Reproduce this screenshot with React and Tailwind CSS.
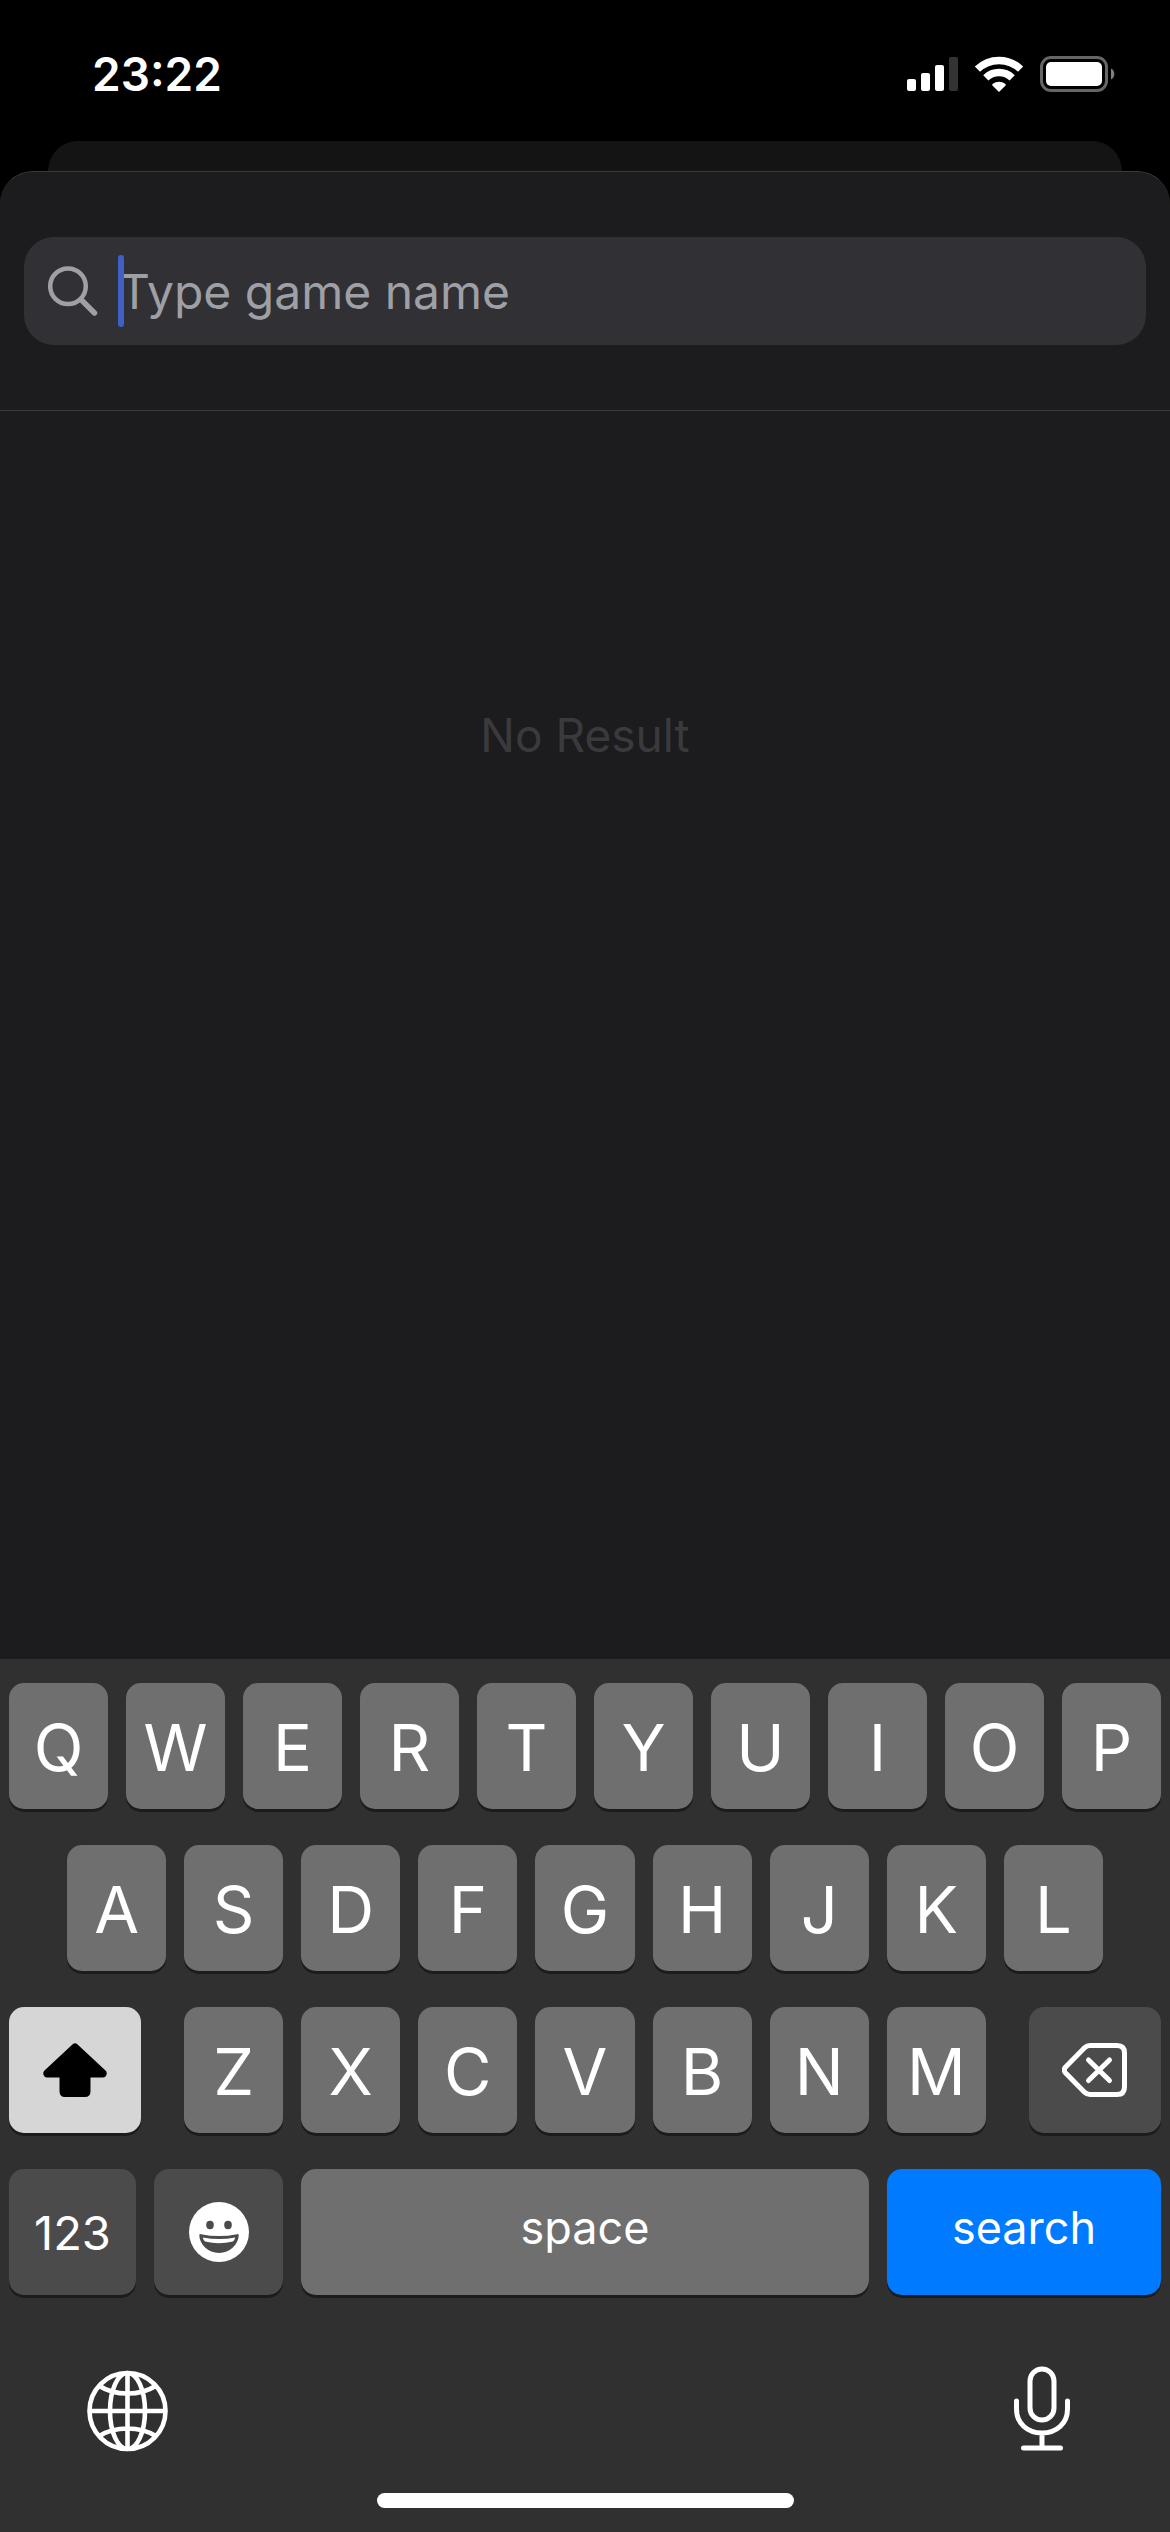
const ROW_ONE = "QWERTYUIOP".split("");
const ROW_TWO = "ASDFGHJKL".split("");
const ROW_THREE = "ZXCVBNM".split("");

function Key({ children, className, ...rest }) {
  return (
    <button
      type="button"
      className={`flex items-center justify-center rounded-[15px] leading-none text-white shadow-[0_3px_0_#1c1c1c] ${className}`}
      {...rest}
    >
      {children}
    </button>
  );
}

function LetterKeys({ letters }) {
  return letters.map((letter) => (
    <Key key={letter} className="bg-[#6f6f6f] pt-[3px] text-[65px]">
      {letter}
    </Key>
  ));
}

function StatusBar() {
  return (
    <header className="flex h-[141px] items-start justify-between pl-[92px] pr-[55px] pt-[50px]">
      <time className="text-[46px] font-semibold leading-[48px] text-white">23:22</time>
      <div className="flex items-center pt-[5px]">
        <svg width="51" height="36" viewBox="0 0 51 36" role="img" aria-label="Signal">
          <rect x="0" y="23" width="9" height="12" rx="2" fill="#fff" />
          <rect x="14" y="17" width="9" height="18" rx="2" fill="#fff" />
          <rect x="28" y="9" width="9" height="26" rx="2" fill="#fff" />
          <rect x="42" y="1" width="9" height="34" rx="2" fill="#333" />
        </svg>
        <svg className="ml-4" width="50" height="38" viewBox="0 0 50 38" role="img" aria-label="Wi-Fi">
          <g fill="none" stroke="#fff" strokeWidth="7.4">
            <path d="M3.4 14.2 A31 31 0 0 1 46.6 14.2" />
            <path d="M11.8 22.8 A19 19 0 0 1 38.2 22.8" />
          </g>
          <path d="M25 37 L18.2 30.2 Q18 29.4 18.8 28.8 A10 10 0 0 1 31.2 28.8 Q32 29.4 31.8 30.2 Z" fill="#fff" />
        </svg>
        <svg className="ml-4" width="75" height="36" viewBox="0 0 75 36" role="img" aria-label="Battery">
          <rect x="1.5" y="1.5" width="65" height="33" rx="9.5" fill="none" stroke="#666" strokeWidth="3" />
          <rect x="6" y="6" width="56" height="24" rx="5" fill="#fff" />
          <path d="M71 12.4 A6.4 6.4 0 0 1 71 23.6 Z" fill="#808080" />
        </svg>
      </div>
    </header>
  );
}

function SearchField() {
  return (
    <label className="relative flex h-[108px] items-center rounded-[30px] bg-[#313135] pl-6">
      <svg width="50" height="50" viewBox="0 0 50 50" fill="none" stroke="#9f9fa6" aria-hidden="true">
        <ellipse cx="20" cy="20.2" rx="17.8" ry="17.8" strokeWidth="4.5" />
        <path d="M33 33.5 L46.5 47" strokeWidth="5.4" strokeLinecap="round" />
      </svg>
      <input
        type="search"
        aria-label="Type game name"
        placeholder="Type game name"
        className="ml-[21px] h-full min-w-0 flex-1 bg-transparent text-[48px] text-white outline-none placeholder:text-[#9f9fa6]"
      />
      <span className="absolute left-[94px] top-[18px] h-[72px] w-[6px] rounded-full bg-[#4060c8]" />
    </label>
  );
}

function Keyboard() {
  return (
    <section aria-label="Keyboard" className="bg-[#303030] pt-6">
      <div className="flex flex-col gap-9 px-[9px]">
        <div className="grid h-[126px] grid-cols-10 gap-[18px]">
          <LetterKeys letters={ROW_ONE} />
        </div>
        <div className="grid h-[126px] grid-cols-9 gap-[18px] px-[58px]">
          <LetterKeys letters={ROW_TWO} />
        </div>
        <div className="flex h-[126px] gap-[43px]">
          <Key aria-label="Shift" className="w-[132px] bg-[#d6d6d6]">
            <svg width="64" height="54" viewBox="0 0 64 54" aria-hidden="true">
              <path
                d="M29.4 1.4 Q32 -1 34.6 1.4 L62.5 27.6 Q64.4 29.6 63.4 32 Q62.4 34.6 60 34.6 H47.5 V48 Q47.5 54 42 54 H22 Q16.5 54 16.5 48 V34.6 H4 Q1.6 34.6 .6 32 Q-.4 29.6 1.5 27.6 Z"
                fill="#000"
              />
            </svg>
          </Key>
          <div className="grid flex-1 grid-cols-7 gap-[18px]">
            <LetterKeys letters={ROW_THREE} />
          </div>
          <Key aria-label="Delete" className="w-[132px] bg-[#4b4b4b]">
            <svg width="66" height="54" viewBox="0 0 66 54" fill="none" stroke="#fff" strokeWidth="5" strokeLinecap="round" strokeLinejoin="round" aria-hidden="true">
              <path d="M28 2.5 H55 Q62.5 2.5 62.5 10 V44 Q62.5 51.5 55 51.5 H28 Q25 51.5 22.8 49.4 L3.6 30 Q0.8 27 3.6 24 L22.8 4.6 Q25 2.5 28 2.5 Z" />
              <path d="M26.5 17 L47.5 37.5 M47.5 17 L26.5 37.5" />
            </svg>
          </Key>
        </div>
        <div className="flex h-[126px] gap-[18px]">
          <Key className="w-[127px] bg-[#4b4b4b] text-[47px]">123</Key>
          <Key aria-label="Emoji" className="w-[129px] bg-[#4b4b4b]">
            <svg width="60" height="60" viewBox="0 0 60 60" aria-hidden="true">
              <circle cx="30" cy="30" r="30" fill="#fff" />
              <ellipse cx="21" cy="23" rx="3.8" ry="4.2" fill="#4b4b4b" />
              <ellipse cx="39" cy="23" rx="3.8" ry="4.2" fill="#4b4b4b" />
              <path d="M10.3 33.5 Q10.3 31.8 12 32.2 Q30 36 48 32.2 Q49.7 31.8 49.7 33.5 C49.5 42 41 51 30 51 C19 51 10.5 42 10.3 33.5 Z" fill="#4b4b4b" />
              <path d="M13.8 35.4 Q30 38.4 46.2 35.4 Q45.6 38.6 43.8 39.6 Q30 43 16.2 39.6 Q14.4 38.6 13.8 35.4 Z" fill="#fff" />
            </svg>
          </Key>
          <Key className="flex-1 bg-[#6f6f6f] pb-[10px] text-[45px]">space</Key>
          <Key className="w-[274px] bg-[#007aff] pb-[10px] text-[45px]">search</Key>
        </div>
      </div>
      <div className="flex items-end justify-between px-[87px] pt-[71px]">
        <button type="button" aria-label="Next keyboard">
          <svg className="block" width="81" height="82" viewBox="0 0 81 82" fill="none" stroke="#fff" strokeWidth="4.6" aria-hidden="true">
            <circle cx="40.5" cy="41" r="38" />
            <ellipse cx="40.5" cy="41" rx="17.5" ry="38" />
            <path d="M40.5 3 V79 M2.5 41 H78.5 M12.5 16 Q24 23.5 40.5 23.5 T68.5 16 M12.5 66 Q24 58.5 40.5 58.5 T68.5 66" />
          </svg>
        </button>
        <button type="button" aria-label="Dictate" className="mr-3">
          <svg className="block" width="58" height="86" viewBox="0 0 58 86" fill="none" stroke="#fff" strokeWidth="5" strokeLinecap="round" aria-hidden="true">
            <rect x="17" y="3" width="24" height="51" rx="12" />
            <path d="M3.5 35 V43 C3.5 57 14 67 29 67 C44 67 54.5 57 54.5 43 V35 M29 67 V82 M10.5 82 H47.5" />
          </svg>
        </button>
      </div>
      <div className="flex justify-center pb-6 pt-[41px]">
        <div className="h-[15px] w-[417px] rounded-full bg-white" />
      </div>
    </section>
  );
}

export default function App() {
  return (
    <div className="flex min-h-screen flex-col bg-black font-['Inter',sans-serif]">
      <StatusBar />
      <div className="mx-[48px] h-[30px] rounded-t-[30px] bg-[#141414]" />
      <main className="flex flex-1 flex-col rounded-t-[33px] border-t border-[#3a3a3c] bg-[#1c1c1e]">
        <div className="border-b border-[#3a3a3c] px-6 py-[65px]">
          <SearchField />
        </div>
        <p className="pt-[296px] text-center text-[46px] leading-[56px] text-[#3a3a3c]">No Result</p>
      </main>
      <Keyboard />
    </div>
  );
}
